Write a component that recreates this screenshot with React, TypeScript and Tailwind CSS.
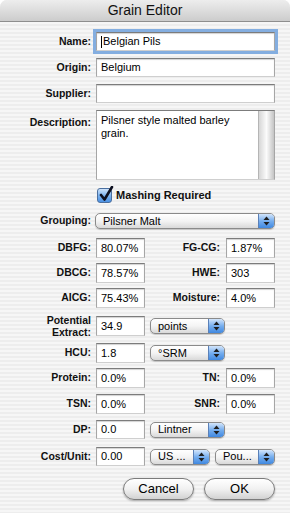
import type { ReactNode } from 'react'

const font = { fontFamily: '"Liberation Sans", Arial, sans-serif' }

const fieldCls =
  'bg-white border border-[#a6a6a6] border-t-[#7c7c7c] border-b-[#cfcfcf] shadow-[inset_0_1px_1px_rgba(0,0,0,0.18)] text-[11px] text-black flex items-center pl-[4px]'

function Label({ children, className = '' }: { children: ReactNode; className?: string }) {
  return <div className={`w-[91px] shrink-0 text-right text-[10.5px] font-bold text-[#111] ${className}`}>{children}</div>
}

function Arrows() {
  return (
    <svg width="7" height="10" viewBox="0 0 7 10">
      <path d="M3.5 0.5 L6.5 4 L0.5 4 Z" fill="#1e1e1e" />
      <path d="M0.5 6 L6.5 6 L3.5 9.5 Z" fill="#1e1e1e" />
    </svg>
  )
}

function Popup({ label, className }: { label: string; className: string }) {
  return (
    <div
      className={`flex items-center h-[16px] rounded-[5px] border border-[#8a8a8a] bg-gradient-to-b from-white via-[#f4f4f4] to-[#d9d9d9] shadow-[0_1px_1px_rgba(0,0,0,0.18)] overflow-hidden ${className}`}
    >
      <span className="flex-1 min-w-0 pl-[7px] text-[11px] leading-none text-black truncate">{label}</span>
      <span className="w-[16px] h-full shrink-0 flex items-center justify-center border-l border-[#5a80b8] bg-gradient-to-b from-[#d3e5fa] via-[#76aeee] to-[#3f88e0]">
        <Arrows />
      </span>
    </div>
  )
}

function NumRow({ a, av, b, bv, className }: { a: string; av: string; b: string; bv: string; className: string }) {
  return (
    <div className={`flex items-center h-[20px] pr-[15px] ${className}`}>
      <Label>{a}</Label>
      <div className={`${fieldCls} ml-[5px] w-[49px] h-[20px]`}>{av}</div>
      <div className="flex-1 text-right pr-[6px] text-[10.5px] font-bold text-[#111]">{b}</div>
      <div className={`${fieldCls} w-[49px] h-[20px]`}>{bv}</div>
    </div>
  )
}

export default function App() {
  return (
    <div className="w-[290px] h-[513px] bg-white overflow-hidden" style={font}>
      <div className="w-[290px] h-[513px] rounded-t-[7px] overflow-hidden flex flex-col bg-[repeating-linear-gradient(180deg,#ededed_0px,#ededed_2px,#f6f6f6_2px,#f6f6f6_4px)]">
        {/* Title bar */}
        <div className="h-[22px] shrink-0 flex items-center justify-center border-b border-[#8e8e8e] bg-gradient-to-b from-[#ededed] via-[#dddddd] to-[#cccccc] text-[14px] text-[#111]">
          Grain Editor
        </div>

        {/* Name */}
        <div className="flex items-center h-[19px] mt-[10px] pr-[15px]">
          <Label>Name:</Label>
          <div className={`${fieldCls} ml-[5px] flex-1 h-[19px] ring-[3px] ring-[#84aee0]`}>
            <span className="w-px h-[12px] bg-black mr-[1px]" />
            Belgian Pils
          </div>
        </div>

        <div className="flex items-center h-[19px] mt-[7px] pr-[15px]">
          <Label>Origin:</Label>
          <div className={`${fieldCls} ml-[5px] flex-1 h-[19px]`}>Belgium</div>
        </div>

        <div className="flex items-center h-[19px] mt-[7px] pr-[15px]">
          <Label>Supplier:</Label>
          <div className={`${fieldCls} ml-[5px] flex-1 h-[19px]`} />
        </div>

        {/* Description */}
        <div className="flex items-start h-[70px] mt-[7px] pr-[15px]">
          <Label className="pt-[5px]">Description:</Label>
          <div className="ml-[5px] flex-1 h-[70px] flex bg-white border border-[#a6a6a6] border-t-[#7c7c7c] border-b-[#cfcfcf]">
            <div className="flex-1 pl-[4px] pt-[3px] pr-[2px] text-[11px] leading-[13px] text-black">
              Pilsner style malted barley grain.
            </div>
            <div className="w-[16px] h-full border-l border-[#b5b5b5] bg-gradient-to-r from-[#d6d6d6] via-[#fbfbfb] to-[#c4c4c4]" />
          </div>
        </div>

        {/* Checkbox */}
        <div className="flex items-center h-[15px] mt-[8px] pl-[97px]">
          <div className="relative w-[15px] h-[15px] rounded-[3px] border border-[#4b6f9f] bg-gradient-to-b from-[#cfe3fa] via-[#7cb3ef] to-[#4a90e2]">
            <svg className="absolute -top-[3px] left-[1px]" width="15" height="16" viewBox="0 0 15 16">
              <path d="M2 9 L5.5 13.5 L13 1" stroke="#0d1020" strokeWidth="2.6" fill="none" strokeLinecap="round" strokeLinejoin="round" />
            </svg>
          </div>
          <span className="ml-[4px] text-[11px] font-bold text-[#111]">Mashing Required</span>
        </div>

        {/* Grouping */}
        <div className="flex items-center h-[16px] mt-[10px] pr-[15px]">
          <Label>Grouping:</Label>
          <Popup label="Pilsner Malt" className="ml-[4px] flex-1" />
        </div>

        <NumRow a="DBFG:" av="80.07%" b="FG-CG:" bv="1.87%" className="mt-[9px]" />
        <NumRow a="DBCG:" av="78.57%" b="HWE:" bv="303" className="mt-[5px]" />
        <NumRow a="AICG:" av="75.43%" b="Moisture:" bv="4.0%" className="mt-[5px]" />

        {/* Potential Extract */}
        <div className="flex items-center h-[20px] mt-[8px]">
          <Label className="leading-[12px]">
            Potential
            <br />
            Extract:
          </Label>
          <div className={`${fieldCls} ml-[5px] w-[49px] h-[20px]`}>34.9</div>
          <Popup label="points" className="ml-[5px] w-[75px]" />
        </div>

        <div className="flex items-center h-[20px] mt-[7px]">
          <Label>HCU:</Label>
          <div className={`${fieldCls} ml-[5px] w-[49px] h-[20px]`}>1.8</div>
          <Popup label="°SRM" className="ml-[5px] w-[75px]" />
        </div>

        <NumRow a="Protein:" av="0.0%" b="TN:" bv="0.0%" className="mt-[5px]" />
        <NumRow a="TSN:" av="0.0%" b="SNR:" bv="0.0%" className="mt-[6px]" />

        <div className="flex items-center h-[19px] mt-[6px]">
          <Label>DP:</Label>
          <div className={`${fieldCls} ml-[5px] w-[49px] h-[19px]`}>0.0</div>
          <Popup label="Lintner" className="ml-[5px] w-[75px]" />
        </div>

        <div className="flex items-center h-[19px] mt-[8px]">
          <Label>Cost/Unit:</Label>
          <div className={`${fieldCls} ml-[5px] w-[49px] h-[19px]`}>0.00</div>
          <Popup label="US ..." className="ml-[5px] w-[60px]" />
          <Popup label="Pou..." className="ml-[5px] w-[60px]" />
        </div>

        {/* Buttons */}
        <div className="flex justify-end gap-[10px] pr-[15px] mt-[12px]">
          <button className="w-[71px] h-[22px] rounded-full border border-[#7b7b7b] bg-gradient-to-b from-white via-[#f1f1f1] to-[#d2d2d2] shadow-[0_1px_2px_rgba(0,0,0,0.3)] text-[13px] text-black">
            Cancel
          </button>
          <button className="w-[71px] h-[22px] rounded-full border border-[#7b7b7b] bg-gradient-to-b from-white via-[#f1f1f1] to-[#d2d2d2] shadow-[0_1px_2px_rgba(0,0,0,0.3)] text-[13px] text-black">
            OK
          </button>
        </div>
      </div>
    </div>
  )
}
